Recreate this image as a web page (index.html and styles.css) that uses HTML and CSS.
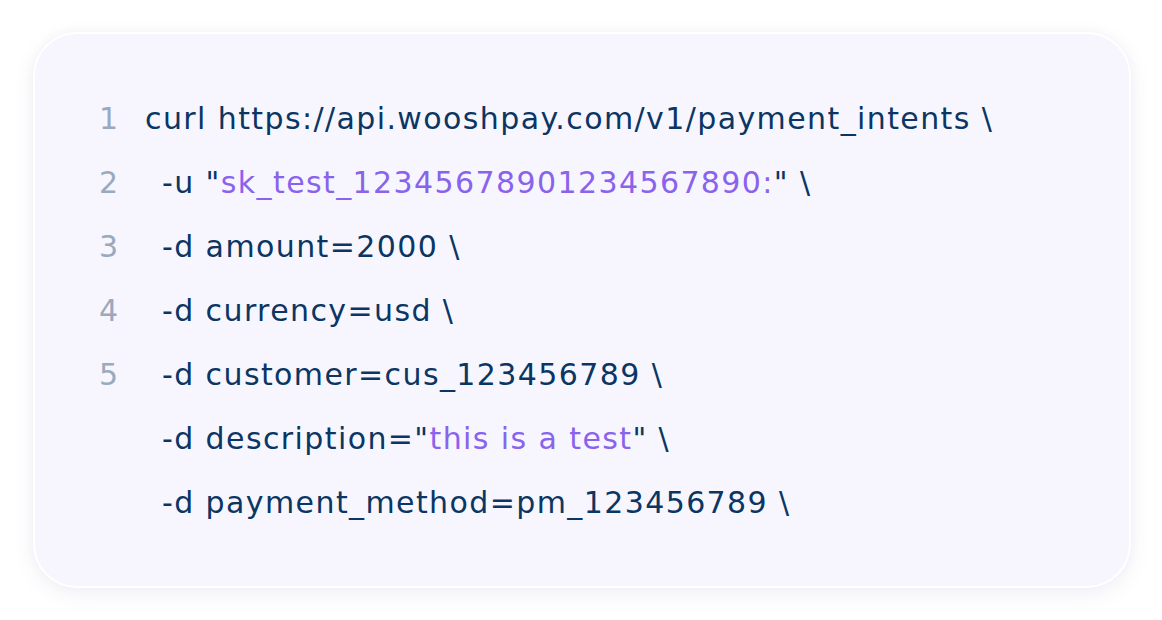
FILE: index.html
```html
<!DOCTYPE html>
<html lang="en">
<head>
<meta charset="utf-8">
<title>Code sample</title>
<link rel="stylesheet" href="styles.css">
</head>
<body>
<main class="page">
  <section class="card">
    <pre class="code"><div class="line"><span class="num">1</span><span class="src">curl https://api.wooshpay.com/v1/payment_intents \</span></div><div class="line"><span class="num">2</span><span class="src ind">-u "<span class="str">sk_test_12345678901234567890:</span>" \</span></div><div class="line"><span class="num">3</span><span class="src ind">-d amount=2000 \</span></div><div class="line"><span class="num">4</span><span class="src ind">-d currency=usd \</span></div><div class="line"><span class="num">5</span><span class="src ind">-d customer=cus_123456789 \</span></div><div class="line"><span class="num"></span><span class="src ind">-d description="<span class="str">this is a test</span>" \</span></div><div class="line"><span class="num"></span><span class="src ind">-d payment_method=pm_123456789 \</span></div></pre>
  </section>
</main>
</body>
</html>
```

FILE: styles.css
```css
* { box-sizing: border-box; }
html, body { margin: 0; padding: 0; background: #ffffff; }
.page {
  width: 1162px;
  height: 620px;
  padding: 32px 31px 32px 33px;
}
.card {
  height: 556px;
  background: #f7f6ff;
  border: 2px solid #ffffff;
  border-radius: 44px;
  box-shadow: 0 6px 24px rgba(40, 30, 120, 0.06), 0 0 12px rgba(40, 30, 120, 0.03);
  padding: 52px 0 0 64px;
}
.code {
  margin: 0;
  font-family: "DejaVu Sans", "Open Sans", sans-serif;
  font-size: 30px;
  letter-spacing: 1.4px;
  color: #0b3663;
  white-space: pre;
}
.line {
  display: flex;
  align-items: center;
  height: 64px;
}
.num {
  width: 46px;
  color: #9aa9bd;
}
.src { white-space: pre; }
.ind { padding-left: 17px; }
.str { color: #8a63ec; }
```
